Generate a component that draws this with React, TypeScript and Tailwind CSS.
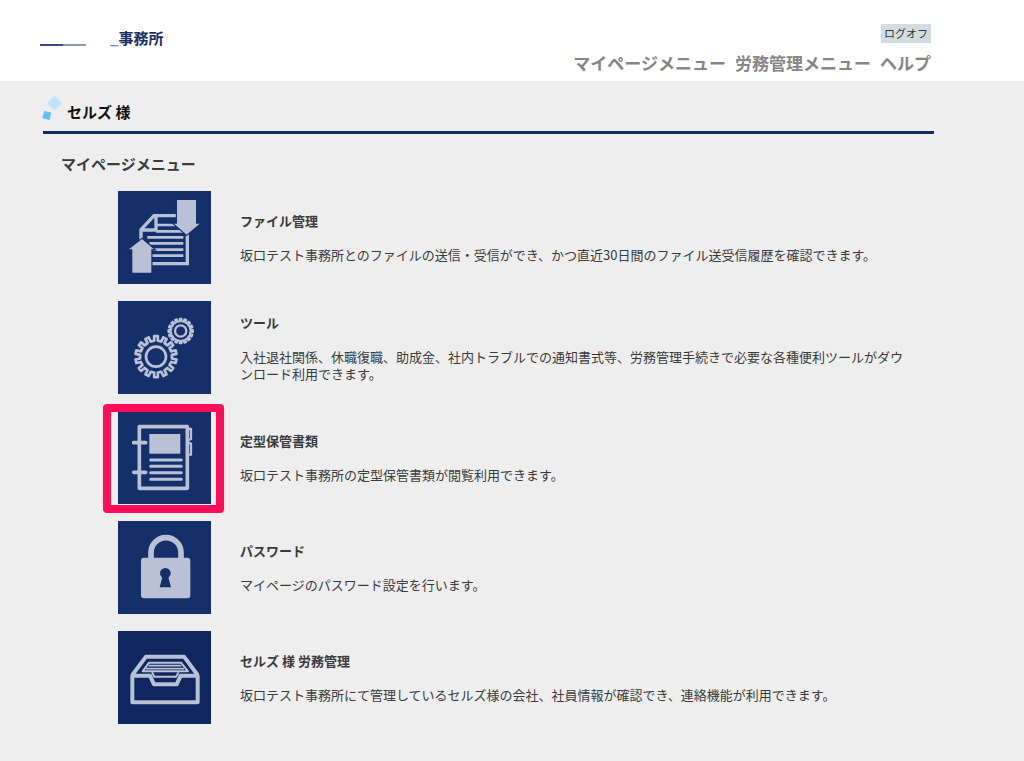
import { FC, ReactNode } from "react";

const gearPath = (cx: number, cy: number, outer: number, inner: number, teeth: number) => {
  const step = (Math.PI * 2) / teeth;
  const points: string[] = [];
  for (let i = 0; i < teeth; i++) {
    const mid = i * step - Math.PI / 2;
    const corners = [
      [inner, mid - step * 0.25],
      [outer, mid - step * 0.2],
      [outer, mid + step * 0.2],
      [inner, mid + step * 0.25],
    ];
    corners.forEach(([r, a]) =>
      points.push(`${(cx + r * Math.cos(a)).toFixed(1)},${(cy + r * Math.sin(a)).toFixed(1)}`)
    );
  }
  return `M${points.join("L")}Z`;
};

const FileIcon: FC = () => (
  <>
    <g fill="none" stroke="currentColor" strokeWidth="10">
      <path d="M174 74H108L69 116V150M114 74V117H69M208 125V218H98" />
      <path
        strokeWidth="8"
        d="M114 102H172M114 121H196M88 139H196M94 157H196M108 176H196M100 194H196"
      />
    </g>
    <g fill="currentColor" stroke="#142f69" strokeWidth="7" style={{ paintOrder: "stroke" }}>
      <path d="M177 27H234V98H245L206 131L168 98H177Z" />
      <path d="M72 144L108 175H100V245H43V175H33Z" />
    </g>
  </>
);

const GearIcon: FC = () => (
  <g fill="none" stroke="currentColor" strokeWidth="8" strokeLinejoin="round">
    <path d={gearPath(114, 167, 62, 48, 14)} />
    <circle cx="114" cy="167" r="30" />
    <path strokeWidth="6" d={gearPath(188, 90, 37, 29, 16)} />
    <circle cx="188" cy="90" r="17" strokeWidth="7" />
  </g>
);

const BookIcon: FC = () => (
  <>
    <g fill="none" stroke="currentColor" strokeWidth="11" strokeLinejoin="round" strokeLinecap="round">
      <rect x="64" y="47" width="144" height="185" />
      <path d="M47 95H83M47 184H83" />
      <path strokeWidth="9" d="M98 147H190M98 166H190M98 185H190M98 205H190" />
      <path strokeWidth="7" d="M210 54H219V84L210 88M210 95L219 98V131H210" />
    </g>
    <rect x="94" y="69" width="93" height="59" fill="currentColor" />
  </>
);

const LockIcon: FC = () => (
  <>
    <path d="M99 114V95a45 45 0 0 1 90 0V114" fill="none" stroke="currentColor" strokeWidth="17" />
    <rect x="69" y="110" width="148" height="122" rx="9" fill="currentColor" />
    <circle cx="142" cy="157" r="16" fill="#142f69" />
    <path d="M134 165H150L159 199H125Z" fill="#142f69" />
  </>
);

const TrayIcon: FC = () => (
  <g fill="none" stroke="currentColor" strokeWidth="12" strokeLinejoin="round">
    <path d="M43 134H96L108 160H176L188 134H239V214H43Z" />
    <path d="M43 132L84 77H198L239 132" />
    <g strokeWidth="6">
      <path d="M74 121L93 95H189L210 121Z" />
      <path strokeWidth="5" d="M92 104H190M84 113H198" />
      <path d="M102 124L109 137H174L182 124" />
    </g>
  </g>
);

interface MenuItem {
  title: string;
  text: string;
  icon: ReactNode;
  tile: string;
  marked?: boolean;
}

const items: MenuItem[] = [
  {
    title: "ファイル管理",
    text: "坂口テスト事務所とのファイルの送信・受信ができ、かつ直近30日間のファイル送受信履歴を確認できます。",
    icon: <FileIcon />,
    tile: "bg-[#142f69]",
  },
  {
    title: "ツール",
    text: "入社退社関係、休職復職、助成金、社内トラブルでの通知書式等、労務管理手続きで必要な各種便利ツールがダウンロード利用できます。",
    icon: <GearIcon />,
    tile: "bg-[#142f69]",
  },
  {
    title: "定型保管書類",
    text: "坂口テスト事務所の定型保管書類が閲覧利用できます。",
    icon: <BookIcon />,
    tile: "bg-[#142f69]",
    marked: true,
  },
  {
    title: "パスワード",
    text: "マイページのパスワード設定を行います。",
    icon: <LockIcon />,
    tile: "bg-[#142f69]",
  },
  {
    title: "セルズ 様 労務管理",
    text: "坂口テスト事務所にて管理しているセルズ様の会社、社員情報が確認でき、連絡機能が利用できます。",
    icon: <TrayIcon />,
    tile: "bg-[#10265e]",
  },
];

const MenuRow: FC<{ item: MenuItem }> = ({ item }) => (
  <li className="flex items-center gap-[29px]">
    <a href="#" aria-label={item.title} className={`relative block shrink-0 ${item.tile}`}>
      <svg viewBox="0 0 279 279" className="size-[93px] text-[#b9c1d6]" aria-hidden="true">
        {item.icon}
      </svg>
      {item.marked && (
        <span className="absolute -top-[7px] -right-[13px] -bottom-[9px] -left-[15px] rounded-[4px] border-8 border-[#ff0d5b]" />
      )}
    </a>
    <div className="max-w-[670px] space-y-[17px] text-[13px] leading-[17px]">
      <h3 className="font-bold">{item.title}</h3>
      <p>{item.text}</p>
    </div>
  </li>
);

const Header: FC = () => (
  <header className="flex h-[81px] items-start justify-between bg-white pr-[93px] pl-10">
    <div className="flex pt-7 text-[15px] leading-5 font-bold text-[#1b2f66]">
      <div className="mt-4 mr-6 flex h-[2px] w-[46px]">
        <span className="flex-1 bg-[#3a4b7d]" />
        <span className="flex-1 bg-[#8d95b5]" />
      </div>
      <span className="text-[#7b86ab]">_</span>
      <span>事務所</span>
    </div>
    <div className="flex flex-col items-end gap-[10px] pt-6">
      <button type="button" className="bg-[#d3dde1] px-[3px] text-[11px] leading-[19px] text-[#333]">
        ログオフ
      </button>
      <nav className="flex gap-[9px] text-[17px] leading-5 font-bold text-[#868686]">
        <a href="#">マイページメニュー</a>
        <a href="#">労務管理メニュー</a>
        <a href="#">ヘルプ</a>
      </nav>
    </div>
  </header>
);

const App: FC = () => {
  return (
    <div className="min-h-screen bg-[#eee] font-['Noto_Sans_CJK_JP',sans-serif] text-[#3a3a3a]">
      <Header />
      <main className="pt-[14px] pr-[90px] pb-[37px] pl-[43px]">
        <div className="flex gap-1 border-b-3 border-[#122a66] pb-[9px]">
          <svg viewBox="0 0 20 26" className="h-[26px] w-5 overflow-visible" aria-hidden="true">
            <path d="M11.5 0.5L19 8L11.5 15.5L4 8Z" fill="#bfe4ff" />
            <path d="M1.2 16L8.3 17.6L6.7 25L-0.7 23.3Z" fill="#66bdff" />
          </svg>
          <h1 className="pt-[7px] text-[15px] leading-5 font-bold text-[#111]">セルズ 様</h1>
        </div>
        <section className="pt-5">
          <h2 className="pl-[18px] text-[15px] leading-5 font-bold">マイページメニュー</h2>
          <ul className="mt-[17px] space-y-[17px] pl-[75px]">
            {items.map((item) => (
              <MenuRow key={item.title} item={item} />
            ))}
          </ul>
        </section>
      </main>
    </div>
  );
};

export default App;
